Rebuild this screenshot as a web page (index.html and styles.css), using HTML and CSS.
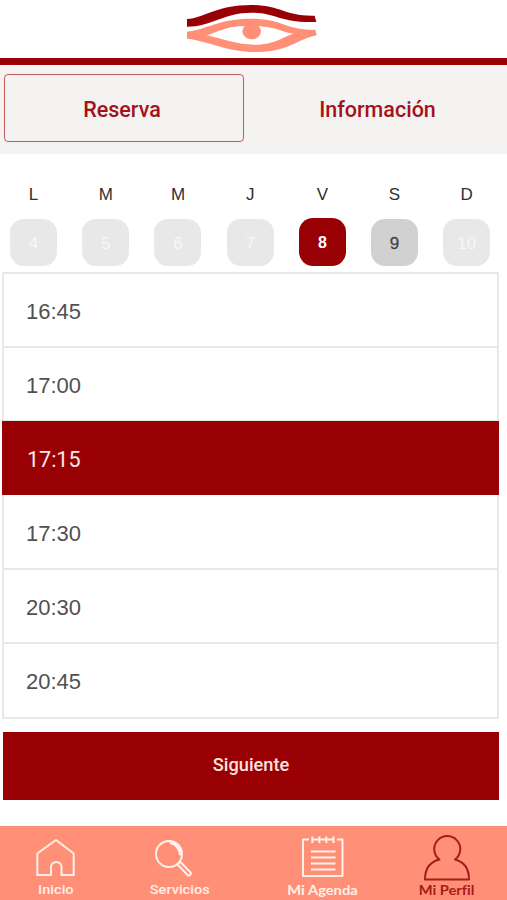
FILE: index.html
```html
<!DOCTYPE html>
<html lang="es">
<head>
<meta charset="utf-8">
<title>Reserva</title>
<link rel="stylesheet" href="styles.css">
</head>
<body>
<div class="app">
  <header class="header">
    <svg class="logo" viewBox="0 0 495 174" aria-hidden="true">
      <path fill="#990004" d="M51 57C100 55 140 15 244 15C335 15 340 49 434 47L439 66C330 70 320 38 244 38C160 38 125 80 51 80Z"/>
      <path fill="#ff9077" fill-rule="evenodd" d="M51 95C110 89 145 56 244 56C340 56 345 91 436 89L440 106C385 116 355 156 262 156C170 156 120 124 51 116ZM110 106C165 88 170 78 244 78C315 78 325 94 370 101C325 118 310 133 254 134C200 134 160 117 110 106Z"/>
      <ellipse fill="#ff9077" cx="245" cy="94" rx="28" ry="24"/>
    </svg>
  </header>
  <div class="tabs">
    <a class="tab tab-active">Reserva</a>
    <a class="tab">Información</a>
  </div>
  <div class="week">
    <div class="day"><span class="name">L</span><span class="date">4</span></div>
    <div class="day"><span class="name">M</span><span class="date">5</span></div>
    <div class="day"><span class="name">M</span><span class="date">6</span></div>
    <div class="day"><span class="name">J</span><span class="date">7</span></div>
    <div class="day"><span class="name">V</span><span class="date date-selected">8</span></div>
    <div class="day"><span class="name">S</span><span class="date date-open">9</span></div>
    <div class="day"><span class="name">D</span><span class="date">10</span></div>
  </div>
  <ul class="slots">
    <li class="slot">16:45</li>
    <li class="slot">17:00</li>
    <li class="slot slot-selected">17:15</li>
    <li class="slot">17:30</li>
    <li class="slot">20:30</li>
    <li class="slot">20:45</li>
  </ul>
  <button class="next">Siguiente</button>
  <nav class="nav">
    <a class="item">
      <svg class="icon" viewBox="0 0 50 50"><path d="M6.300 43V21.500L25 8L42.700 21.500V43H30.500V34.500A5.300 5.300 0 0 0 20 34.500V43Z"/></svg>
      <span class="label">Inicio</span>
    </a>
    <a class="item">
      <svg class="icon" viewBox="0 0 50 50"><circle cx="14" cy="22" r="13"/><path d="M22.500 32.500L33 43.500Q35.500 44 36 41L25.500 30Z"/><path class="solid" d="M14 8C22 9 27 16 27 24L24 23Q23 16 18 13Q14 13 14 8Z"/></svg>
      <span class="label">Servicios</span>
    </a>
    <a class="item">
      <svg class="icon" viewBox="0 0 50 50"><path d="M11 7.500H5V44H44.500V7.500H39M13.500 7.500H36M14.300 4.500V11M21.300 4.500V11M28.300 4.500V11M35.500 4.500V11M13 19.500H37.500M13 25.500H37.500M13 31.500H37.500M13 37.500H37.500"/></svg>
      <span class="label label-wide">Mi Agenda</span>
    </a>
    <a class="item item-active">
      <svg class="icon" viewBox="0 0 50 50"><path d="M17.500 27.500A13 13 0 1 1 33 27.500C41 29.500 47 35 47 47.500H3C3 35 9 29.500 17.500 27.500Z"/></svg>
      <span class="label label-wide">Mi Perfil</span>
    </a>
  </nav>
</div>
</body>
</html>
```
FILE: styles.css
```css
* { box-sizing: border-box; }
body {
  margin: 0;
  background: #fff;
  font-family: Roboto, sans-serif;
  overflow: hidden;
}
.app {
  width: 507px;
  height: 900px;
  display: flex;
  flex-direction: column;
}
.header {
  height: 65px;
  padding-left: 170px;
  border-bottom: 7px solid #990004;
}
.logo { display: block; width: 165px; height: 58px; }
.tabs {
  display: grid;
  grid-template-columns: 240px 1fr;
  height: 89px;
  padding: 9px 0 12px 4px;
  background: #f5f3f2;
}
.tab {
  display: flex;
  align-items: center;
  justify-content: center;
  padding: 2px 0 0 4px;
  color: #a31219;
  font-size: 21.500px;
  font-weight: 500;
  border: 1.500px solid transparent;
  border-radius: 4px;
}
.tab-active { padding: 2px 4px 0 0; border-color: #c05c5c; }
.week {
  display: grid;
  grid-template-columns: repeat(7, 72.200px);
  height: 118px;
  margin-left: -2.500px;
  padding-top: 31px;
}
.day {
  display: flex;
  flex-direction: column;
  align-items: center;
  font-family: "Liberation Sans", sans-serif;
}
.name { height: 34px; font-size: 17px; line-height: 20px; color: #303030; }
.date {
  width: 47px;
  height: 47px;
  border-radius: 14px;
  background: #e8e8e8;
  color: #f7f7f7;
  font-size: 17px;
  line-height: 49px;
  text-align: center;
}
.date-selected {
  height: 48px;
  margin-top: -1px;
  background: #990004;
  color: #fff;
  font-weight: bold;
  font-size: 16px;
}
.date-open { background: #d1d1d1; color: #444; -webkit-text-stroke: .3px #444; }
.slots {
  width: 497px;
  height: 447px;
  margin: 0 0 0 2px;
  padding: 0;
  border: 2px solid #e8e8e8;
  list-style: none;
}
.slot {
  height: 74px;
  padding-left: 22px;
  border-bottom: 2px solid #e8e8e8;
  color: #505153;
  font: 22px/76px "Liberation Sans", sans-serif;
}
.slot:last-child { border: 0; }
.slot-selected {
  margin: -1px -2px 1px;
  height: 74px;
  padding-left: 25px;
  border: 0;
  background: #990004;
  color: #fbe9e6;
  font: 21.500px/77px Roboto, sans-serif;
}
.next {
  width: 496px;
  height: 68px;
  margin: 13px 0 0 3px;
  padding: 0 0 4px;
  border: 0;
  background: #990004;
  color: #fbe3df;
  font: 500 18.200px Roboto, sans-serif;
}
.nav {
  display: grid;
  grid-template-columns: 112px 136px 150px 98px;
  height: 74px;
  margin-top: auto;
  padding-top: 6px;
  background: #ff9077;
}
.item {
  display: flex;
  flex-direction: column;
  align-items: center;
  color: #fff0e9;
}
.icon {
  width: 50px;
  height: 50px;
  fill: none;
  stroke: currentColor;
  stroke-width: 2;
  stroke-linejoin: round;
}
.icon .solid { fill: currentColor; stroke: none; }
.label {
  font-size: 13px;
  font-weight: 500;
  line-height: 16px;
  white-space: nowrap;
  transform: scaleX(1.120);
}
.label-wide {
  font-family: Lato, sans-serif;
  font-weight: 700;
  font-size: 14px;
  line-height: 15px;
  font-variant-ligatures: none;
  transform: scaleX(1.050);
}
.item-active { color: #a61c18; }
```
